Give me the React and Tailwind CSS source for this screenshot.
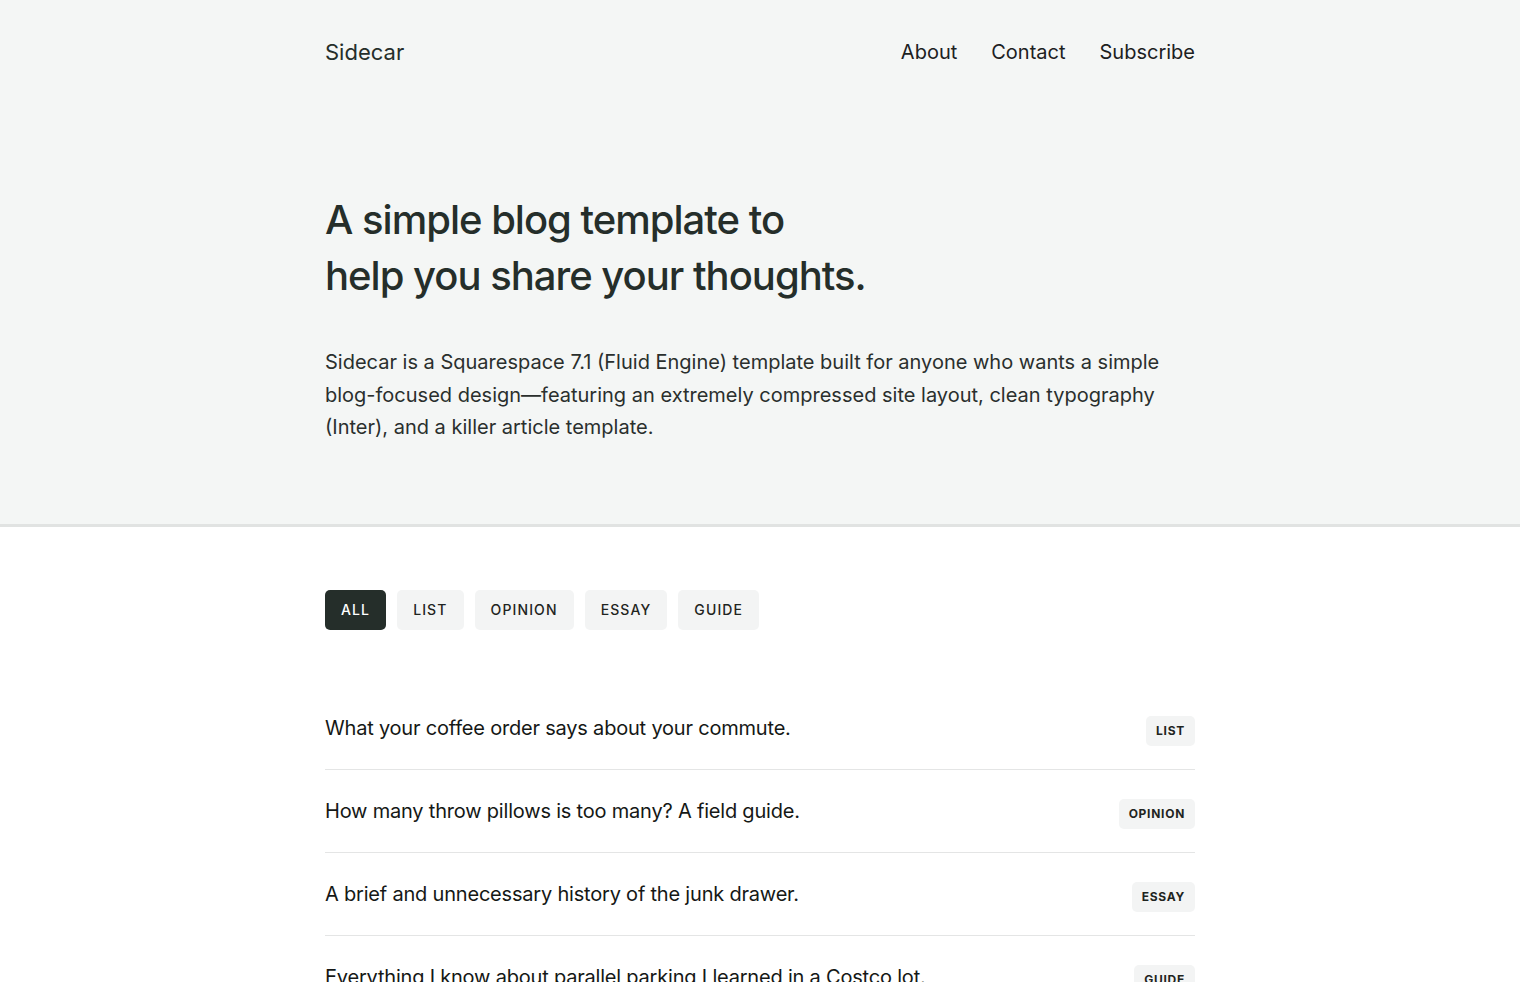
import { useState } from 'react';

const filters = ['All', 'List', 'Opinion', 'Essay', 'Guide'];

const posts = [
  { title: 'What your coffee order says about your commute.', tag: 'List' },
  { title: 'How many throw pillows is too many? A field guide.', tag: 'Opinion' },
  { title: 'A brief and unnecessary history of the junk drawer.', tag: 'Essay' },
  { title: 'Everything I know about parallel parking I learned in a Costco lot.', tag: 'Guide' },
  { title: 'Ranking every chair I have ever sat in at a dentist office.', tag: 'List' },
];

const App = () => {
  const [active, setActive] = useState('All');

  const shown = active === 'All' ? posts : posts.filter((p) => p.tag === active);

  return (
    <div className="min-h-screen bg-white text-[#1f2421] font-['Inter',sans-serif] antialiased">
      <section className="bg-[#f4f6f5] border-b-[3px] border-[#e1e3e2]">
        <div className="max-w-[870px] mx-auto pt-[38px] pb-[80px]">
          <header className="flex items-center justify-between">
            <a href="#" className="text-[22px] leading-7 text-[#252e2a]">Sidecar</a>
            <nav className="flex items-center gap-[34px] text-[20px] leading-7 text-[#1c211f]">
              <a href="#">About</a>
              <a href="#">Contact</a>
              <a href="#">Subscribe</a>
            </nav>
          </header>

          <h1 className="mt-[126px] text-[40px] leading-[56px] font-medium tracking-[-0.025em] text-[#252e2a]">
            A simple blog template to
            <br />
            help you share your thoughts.
          </h1>

          <p className="mt-[42px] text-[20px] leading-[32.5px] text-[#2a2f2d] max-w-[850px]">
            Sidecar is a Squarespace 7.1 (Fluid Engine) template built for anyone who wants a simple
            blog-focused design—featuring an extremely compressed site layout, clean typography
            (Inter), and a killer article template.
          </p>
        </div>
      </section>

      <main className="max-w-[870px] mx-auto pt-[63px] pb-20">
        <div className="flex items-center gap-[11px]">
          {filters.map((f) => (
            <button
              key={f}
              onClick={() => setActive(f)}
              className={
                active === f
                  ? 'h-10 px-4 rounded-[5px] bg-[#252e2a] text-white text-[14px] font-medium tracking-[0.08em] uppercase'
                  : 'h-10 px-4 rounded-[5px] bg-[#f3f4f4] text-[#1f2421] text-[14px] font-medium tracking-[0.08em] uppercase'
              }
            >
              {f}
            </button>
          ))}
        </div>

        <ul className="mt-[57px]">
          {shown.map((post) => (
            <li
              key={post.title}
              className="flex items-center justify-between py-[26px] border-b-[1.5px] border-[#e4e5e5]"
            >
              <a href="#" className="text-[20px] leading-[30px] tracking-[-0.01em] text-[#151816]">{post.title}</a>
              <span className="h-[30px] px-[10px] flex items-center translate-y-[3px] rounded-[5px] bg-[#f3f4f4] text-[12px] font-bold tracking-[0.06em] uppercase text-[#1f2421]">
                {post.tag}
              </span>
            </li>
          ))}
        </ul>
      </main>
    </div>
  );
};

export default App;
